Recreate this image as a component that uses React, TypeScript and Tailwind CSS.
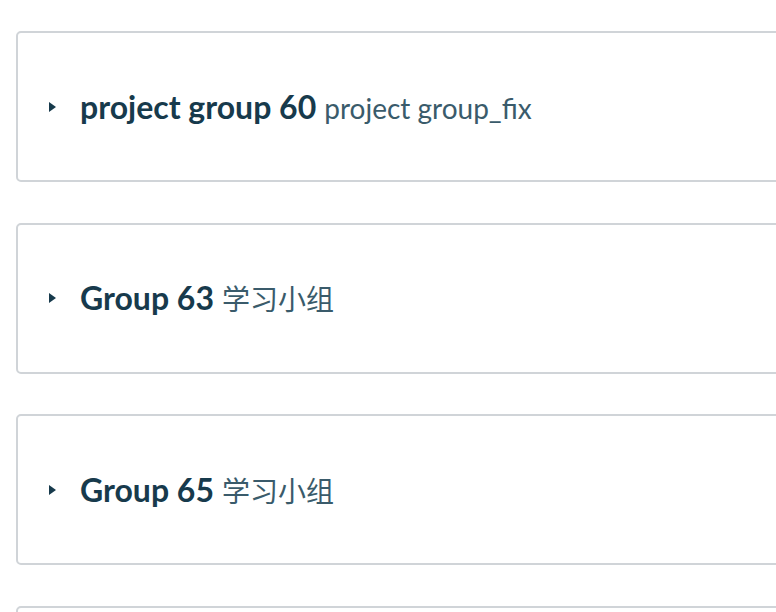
const groups = [
  { name: 'project group 60', note: 'project group_fix' },
  { name: 'Group 63', note: '学习小组' },
  { name: 'Group 65', note: '学习小组' }
];

function Caret() {
  return (
    <svg viewBox="0 0 7 10" className="h-[10px] w-[7px] flex-none" aria-hidden="true">
      <path d="M0 0 7 5 0 10Z" fill="#173a4c" />
    </svg>
  );
}

export default function App() {
  return (
    <div
      className="h-[612px] w-[776px] overflow-hidden bg-white"
      style={{ fontFamily: 'Lato, "Noto Sans CJK SC", sans-serif' }}
    >
      <div className="flex flex-col gap-[40.5px] pl-[16px] pt-[31px]">
        {groups.map((group) => (
          <div
            key={group.name}
            className="flex h-[151px] w-[820px] flex-none items-center gap-[24px] rounded-[5px] border-2 border-[#d0d4d8] pl-[31px]"
          >
            <Caret />
            <div className="flex items-baseline gap-[8px] whitespace-nowrap">
              <span className="text-[32px] font-bold text-[#173a4c]">{group.name}</span>
              <span className="text-[28px] text-[#3a5b6b]">{group.note}</span>
            </div>
          </div>
        ))}
        <div className="h-[151px] w-[820px] flex-none rounded-[5px] border-2 border-[#d0d4d8]" />
      </div>
    </div>
  );
}
